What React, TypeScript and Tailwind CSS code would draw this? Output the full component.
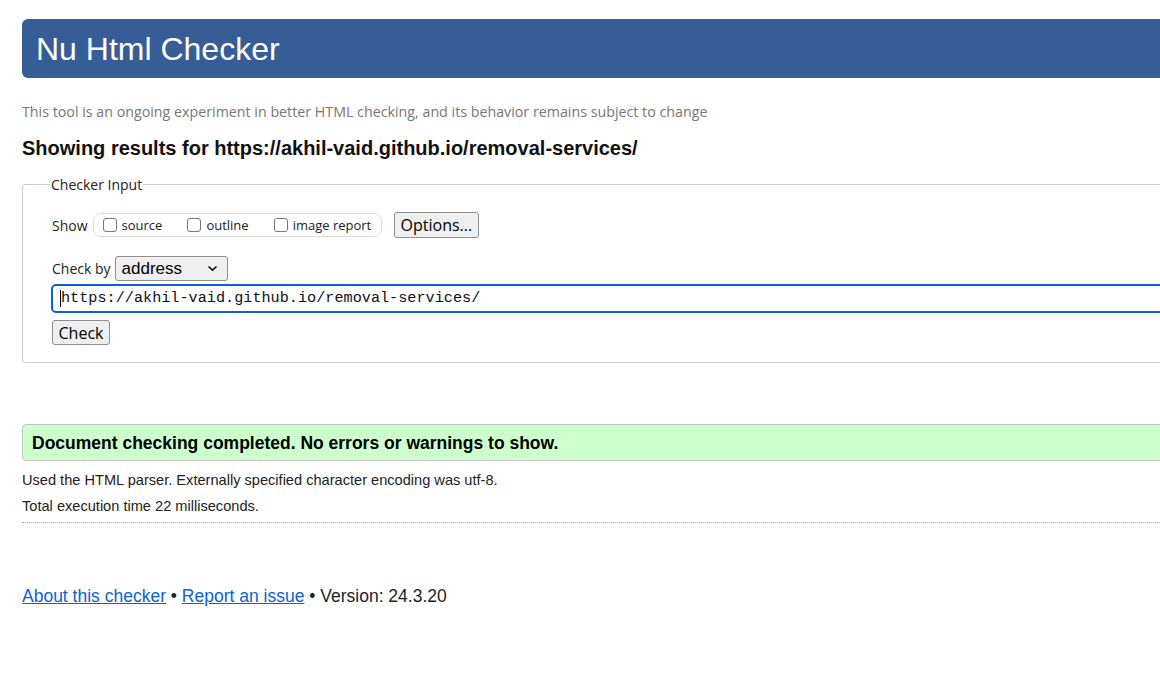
import React from 'react';

const ui = { fontFamily: '"Open Sans", "Noto Sans", "Liberation Sans", sans-serif' };
const arial = { fontFamily: '"Liberation Sans", Arial, sans-serif' };
const mono = { fontFamily: '"Liberation Mono", "DejaVu Sans Mono", monospace' };

const Box = ({ label }: { label: string }) => (
  <span className="flex items-center gap-[5px]">
    <span className="w-[14px] h-[14px] border-[1.5px] border-[#767676] rounded-[3px] bg-white" />
    <span className="text-[13px] text-[#222]" style={ui}>{label}</span>
  </span>
);

const App: React.FC = () => {
  return (
    <div className="w-[1160px] h-[697px] overflow-hidden bg-white">
      <div className="w-[1400px] pl-[22px] pt-[19px]" style={arial}>
        {/* Header */}
        <div className="h-[59px] bg-[#365d95] rounded-[6px] pl-[14px] flex items-center">
          <h1 className="text-[32px] text-white leading-none" style={arial}>Nu Html Checker</h1>
        </div>

        <p className="mt-[23px] text-[14.25px] text-[#777]" style={ui}>
          This tool is an ongoing experiment in better HTML checking, and its behavior remains subject to change
        </p>
        <h2 className="mt-[14px] text-[20px] font-bold text-[#111] leading-[24px]">
          Showing results for https://akhil-vaid.github.io/removal-services/
        </h2>

        {/* Checker input */}
        <fieldset className="mt-[14px] border border-[#ccc] rounded-[3px] pl-[29px] pr-[10px] pb-[16px]">
          <legend className="ml-[-2px] px-[1px] text-[14px] text-[#222]" style={ui}>Checker Input</legend>
          <div className="flex items-center mt-[17px] h-[26px]">
            <span className="text-[14px] text-[#222]" style={ui}>Show</span>
            <div className="ml-[5px] h-[24px] w-[289px] border border-[#ddd] rounded-[8px] flex items-center pl-[9px] gap-[25px]">
              <Box label="source" />
              <Box label="outline" />
              <Box label="image report" />
            </div>
            <button className="ml-[12px] h-[26px] px-[6px] bg-[#efefef] border border-[#8f8f8f] rounded-[3px] text-[16px] text-black" style={ui}>
              Options...
            </button>
          </div>

          <div className="flex items-center mt-[18px]">
            <span className="text-[14px] text-[#222]" style={ui}>Check by</span>
            <div className="ml-[4px] h-[25px] w-[113px] bg-[#efefef] border border-[#8f8f8f] rounded-[3px] flex items-center justify-between pl-[6px] pr-[9px]">
              <span className="text-[17px] text-black" style={arial}>address</span>
              <svg width="11" height="7" viewBox="0 0 11 7">
                <path d="M1.5 1.5 L5.5 5.2 L9.5 1.5" stroke="#111" strokeWidth="1.6" fill="none" />
              </svg>
            </div>
          </div>

          <div className="mt-[3px] -ml-[1px] h-[29px] border-2 border-[#1260d6] rounded-[5px] flex items-center pl-[7px]">
            <span className="w-[1px] h-[17px] bg-black" />
            <span className="text-[15.2px] text-[#111]" style={mono}>https://akhil-vaid.github.io/removal-services/</span>
          </div>

          <button className="mt-[7px] h-[25px] w-[58px] bg-[#efefef] border border-[#8f8f8f] rounded-[3px] text-[16px] text-black" style={ui}>
            Check
          </button>
        </fieldset>

        {/* Result */}
        <div className="mt-[61px] h-[37px] bg-[#ccffcc] border border-[#c4c4c4] rounded-l-[4px] flex items-center pl-[9px]">
          <span className="text-[17.5px] font-bold text-black">Document checking completed. No errors or warnings to show.</span>
        </div>
        <p className="mt-[10px] text-[14.6px] text-[#222] leading-[18px]">
          Used the HTML parser. Externally specified character encoding was utf-8.
        </p>
        <p className="mt-[8px] text-[14.6px] text-[#222] leading-[18px]">Total execution time 22 milliseconds.</p>
        <div className="mt-[7px] border-t border-dotted border-[#aaa]" />

        {/* Footer */}
        <p className="mt-[60px] text-[17.5px] text-[#222]">
          <a href="#" className="text-[#0a63d6] underline">About this checker</a>
          {' • '}
          <a href="#" className="text-[#0a63d6] underline">Report an issue</a>
          {' • Version: 24.3.20'}
        </p>
      </div>
    </div>
  );
};

export default App;
